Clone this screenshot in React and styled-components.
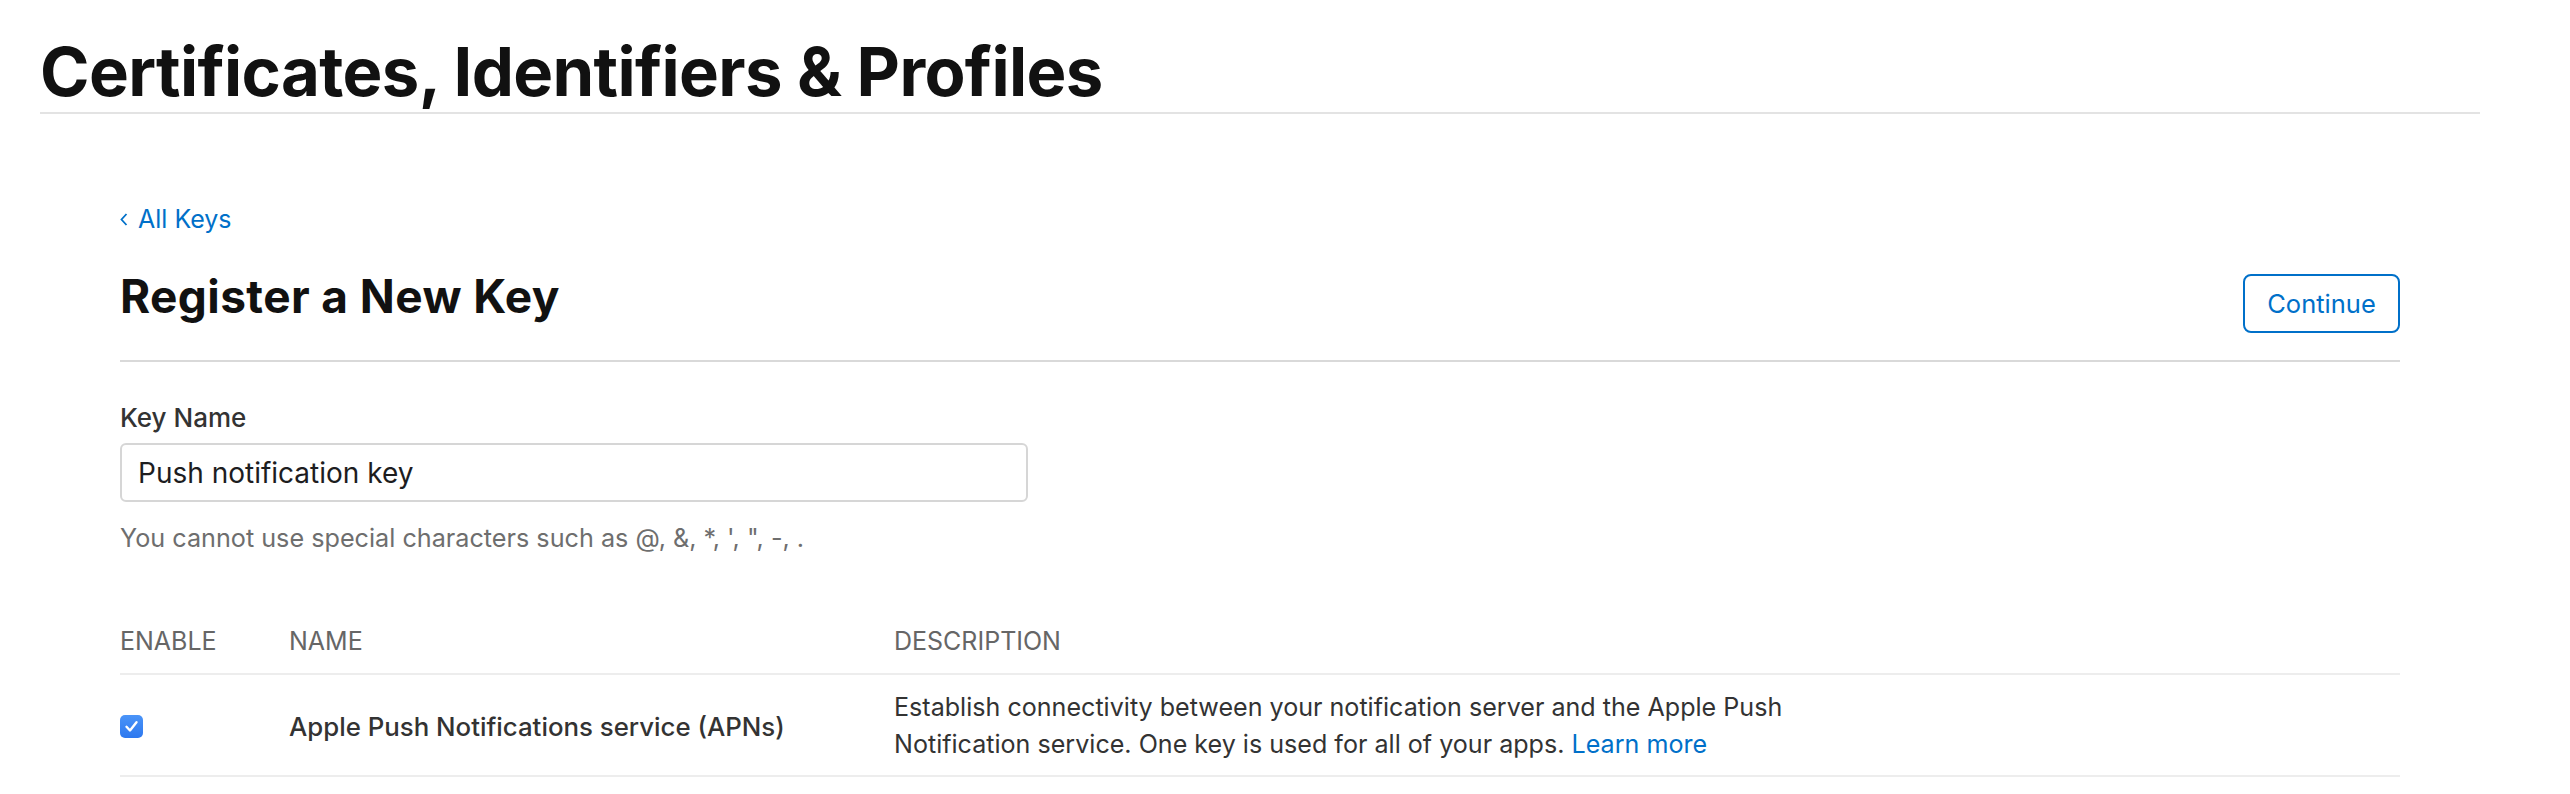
import React from 'react';
import styled, { createGlobalStyle } from 'styled-components';

const GlobalStyle = createGlobalStyle`
  body {
    margin: 0;
    background: #fff;
    font-family: Inter, "Liberation Sans", Arial, sans-serif;
    color: #333;
  }
`;

const Page = styled.div`
  margin-left: 40px;
  width: 2440px;
`;

const Header = styled.header`
  padding-top: 32px;
  border-bottom: 2px solid #e3e3e3;
`;

const Title = styled.h1`
  margin: 0;
  font-size: 67px;
  line-height: 80px;
  font-weight: 700;
  letter-spacing: -0.65px;
  color: #111;
`;

const Content = styled.main`
  padding: 90px 80px 0;
`;

const BackLink = styled.a`
  display: flex;
  align-items: center;
  gap: 10px;
  font-size: 25px;
  line-height: 30px;
  color: #0070c9;
  text-decoration: none;
`;

const TitleRow = styled.div`
  display: flex;
  justify-content: space-between;
  align-items: flex-start;
  margin-top: 35px;
  padding-bottom: 27px;
  border-bottom: 2px solid #d9d9d9;
`;

const Heading = styled.h2`
  margin: 0;
  font-size: 46px;
  line-height: 54px;
  font-weight: 700;
  letter-spacing: 0.4px;
  color: #111;
`;

const Button = styled.button`
  margin-top: 5px;
  height: 59px;
  width: 157px;
  border: 2px solid #0070c9;
  border-radius: 8px;
  background: #fff;
  color: #0070c9;
  font-family: inherit;
  font-size: 25.5px;
  padding: 0;
`;

const Label = styled.label`
  display: block;
  margin-top: 41px;
  font-size: 26px;
  line-height: 30px;
  font-weight: 500;
  color: #333;
`;

const Input = styled.input`
  display: block;
  box-sizing: border-box;
  margin-top: 10px;
  width: 908px;
  height: 59px;
  padding: 0 16px;
  border: 2px solid #d6d6d6;
  border-radius: 6px;
  font-family: inherit;
  font-size: 28px;
  color: #1d1d1f;
  outline: none;
`;

const Hint = styled.p`
  margin: 21px 0 0;
  font-size: 25.2px;
  line-height: 30px;
  color: #6e6e6e;
`;

const Table = styled.div`
  margin-top: 74px;
`;

const Row = styled.div`
  display: grid;
  grid-template-columns: 169px 605px 1fr;
  align-items: center;
  border-bottom: 2px solid #ededed;
  padding: ${p => (p.$head ? '0 0 18px' : '14px 0 12px')};
`;

const HeadCell = styled.div`
  font-size: 25px;
  line-height: 28px;
  text-transform: uppercase;
  color: #666;
`;

const NameCell = styled.div`
  font-size: 25.8px;
  font-weight: 500;
  color: #333;
`;

const Desc = styled.div`
  max-width: 960px;
  font-size: 25.1px;
  line-height: 37px;
  color: #333;
`;

const Link = styled.a`
  color: #0070c9;
  text-decoration: none;
`;

const Check = styled.span`
  display: flex;
  align-items: center;
  justify-content: center;
  width: 23px;
  height: 23px;
  border-radius: 5px;
  background: linear-gradient(#4a94f8, #2d78ef);
`;

const App = () => {
  return (
    <Page>
      <GlobalStyle />
      <Header>
        <Title>Certificates, Identifiers &amp; Profiles</Title>
      </Header>
      <Content>
        <BackLink href="#">
          <svg width="8" height="13" viewBox="0 0 8 13">
            <polyline points="6.5,1 1.5,6.5 6.5,12" fill="none" stroke="#0070c9" strokeWidth="1.8" />
          </svg>
          All Keys
        </BackLink>
        <TitleRow>
          <Heading>Register a New Key</Heading>
          <Button>Continue</Button>
        </TitleRow>
        <Label htmlFor="keyname">Key Name</Label>
        <Input id="keyname" defaultValue="Push notification key" />
        <Hint>You cannot use special characters such as @, &amp;, *, ', ", -, .</Hint>
        <Table>
          <Row $head>
            <HeadCell>Enable</HeadCell>
            <HeadCell>Name</HeadCell>
            <HeadCell>Description</HeadCell>
          </Row>
          <Row>
            <Check>
              <svg width="15" height="15" viewBox="0 0 15 15">
                <polyline points="2.5,7.8 6,11.5 12.5,3.2" fill="none" stroke="#fff" strokeWidth="2.4" strokeLinecap="round" strokeLinejoin="round" />
              </svg>
            </Check>
            <NameCell>Apple Push Notifications service (APNs)</NameCell>
            <Desc>
              Establish connectivity between your notification server and the Apple Push
              Notification service. One key is used for all of your apps. <Link href="#">Learn more</Link>
            </Desc>
          </Row>
        </Table>
      </Content>
    </Page>
  );
};

export default App;
